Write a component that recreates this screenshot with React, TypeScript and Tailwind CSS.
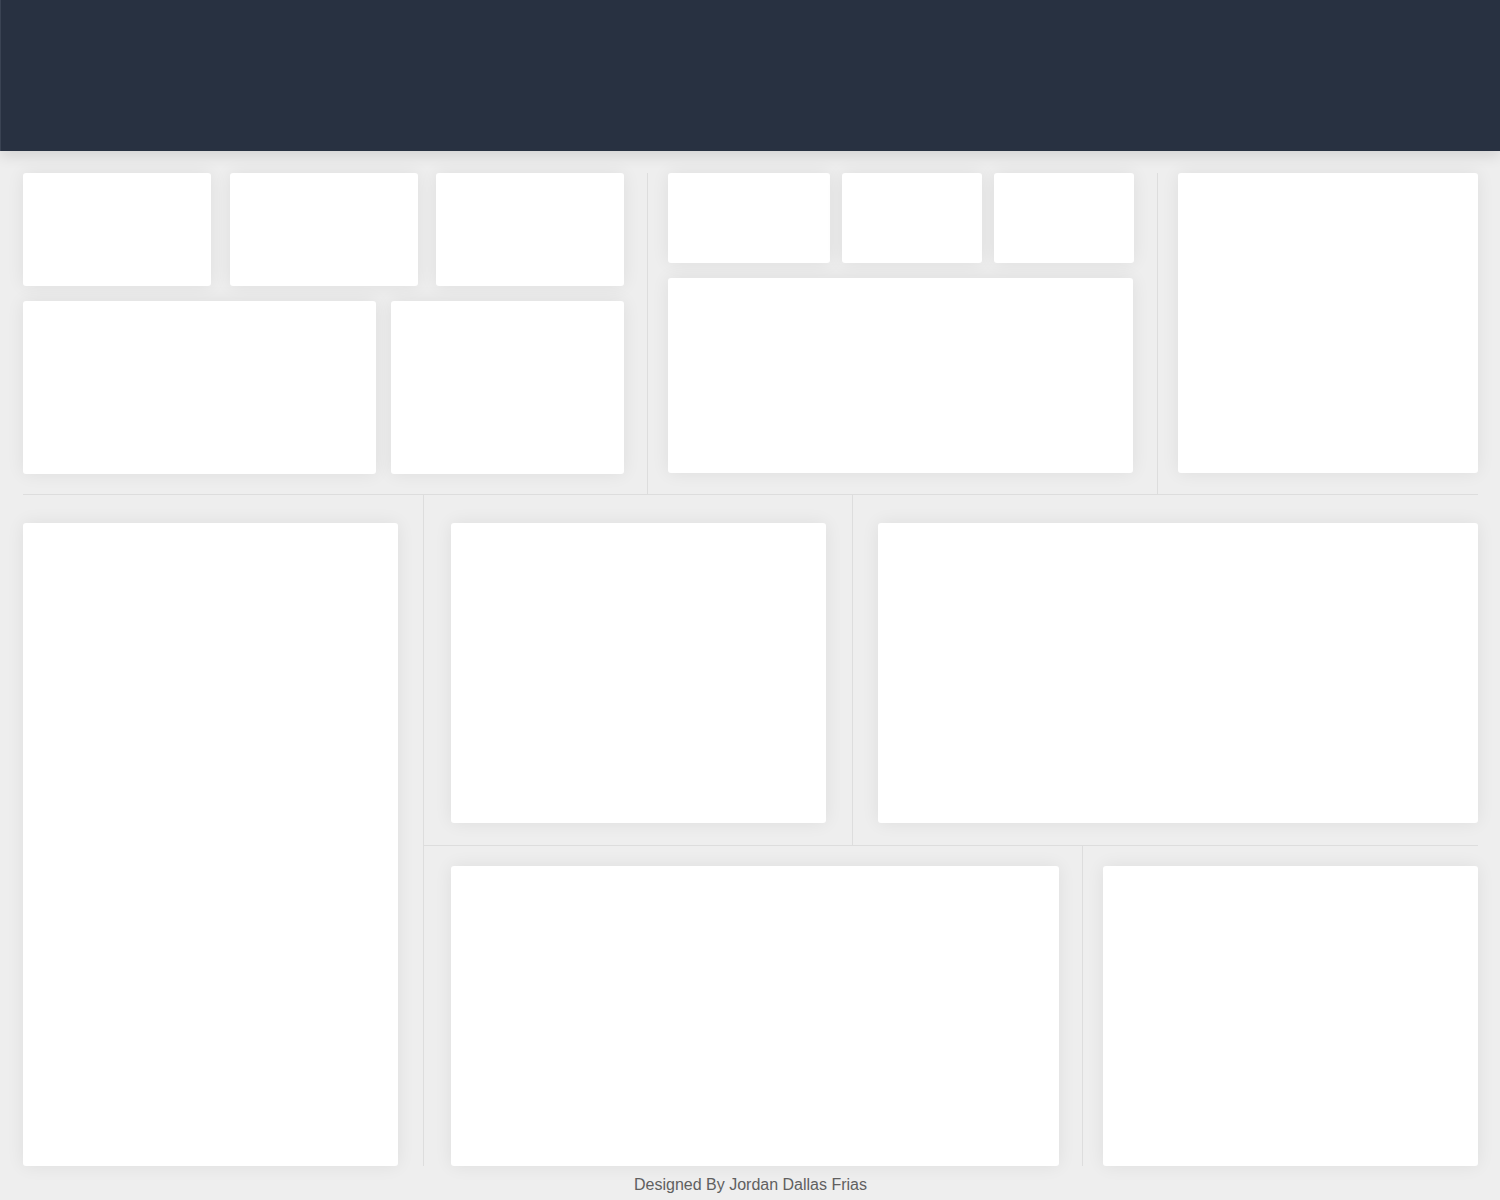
const card = "bg-white rounded-[3px] shadow-[0_0_18px_rgba(0,0,0,0.07)]";

const App = () => {
  return (
    <div className="min-h-[1200px] bg-[#eeeeee] font-['Liberation_Sans',sans-serif]">
      {/* header */}
      <div className="h-[151px] bg-[#283141] border-l border-[#3a4353] shadow-[0_4px_14px_rgba(0,0,0,0.12)]" />

      <div className="pl-[23px] pr-[22px] pt-[22px]">
        {/* top section */}
        <div className="flex h-[322px] border-b border-[#dddddd]">
          <div className="w-[625px] pr-[22px] border-r border-[#dddddd] flex flex-col gap-[15px]">
            <div className="flex h-[113px]">
              <div className={`${card} w-[188px]`} />
              <div className={`${card} w-[188px] ml-[19px]`} />
              <div className={`${card} w-[188px] ml-[18px]`} />
            </div>
            <div className="flex h-[173px] gap-[15px]">
              <div className={`${card} w-[353px]`} />
              <div className={`${card} w-[233px]`} />
            </div>
          </div>
          <div className="w-[510px] pl-[20px] pr-[22px] border-r border-[#dddddd] flex flex-col gap-[15px]">
            <div className="flex h-[90px] gap-[12px]">
              <div className={`${card} w-[162px]`} />
              <div className={`${card} w-[140px]`} />
              <div className={`${card} w-[140px]`} />
            </div>
            <div className={`${card} h-[195px] w-[465px]`} />
          </div>
          <div className="flex-1 pl-[20px]">
            <div className={`${card} h-[300px]`} />
          </div>
        </div>

        {/* bottom section */}
        <div className="flex h-[671px]">
          <div className="w-[401px] pt-[28px] pr-[25px] border-r border-[#dddddd]">
            <div className={`${card} h-[643px]`} />
          </div>
          <div className="flex-1 flex flex-col">
            <div className="flex h-[351px] border-b border-[#dddddd]">
              <div className="w-[429px] pl-[27px] pt-[28px] pr-[26px] border-r border-[#dddddd]">
                <div className={`${card} h-[300px]`} />
              </div>
              <div className="flex-1 pl-[25px] pt-[28px]">
                <div className={`${card} h-[300px]`} />
              </div>
            </div>
            <div className="flex flex-1">
              <div className="w-[659px] pl-[27px] pt-[20px] pr-[23px] border-r border-[#dddddd]">
                <div className={`${card} h-[300px]`} />
              </div>
              <div className="flex-1 pl-[20px] pt-[20px]">
                <div className={`${card} h-[300px]`} />
              </div>
            </div>
          </div>
        </div>

        <div className="text-center text-[16px] text-[#606060] pt-[8px] leading-[22px]">
          Designed By Jordan Dallas Frias
        </div>
      </div>
    </div>
  );
};

export default App;
